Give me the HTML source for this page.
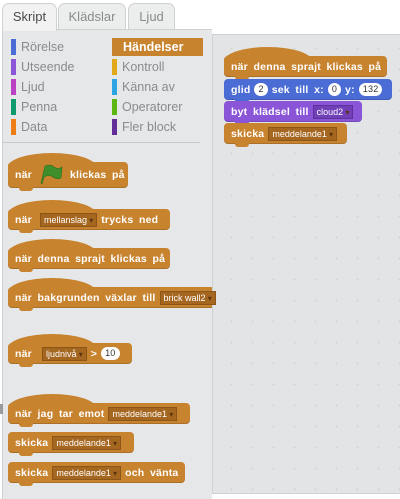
<!DOCTYPE html>
<html><head><meta charset="utf-8"><style>
*{margin:0;padding:0;box-sizing:border-box}
body{width:400px;height:490px;overflow:hidden;background:#fff;font-family:"Liberation Sans",Arial,sans-serif;position:relative}
.tab{position:absolute;top:3px;height:27px;border:1px solid #cfd1d2;border-bottom:none;border-radius:7px 7px 0 0;background:#eceded;color:#8a8b8c;font-size:13px;text-align:center;line-height:25px}
.tab.act{background:#f2f2f2;color:#4a4a4a;height:28px;z-index:2}
#pal{position:absolute;left:2px;top:29px;width:210px;height:470px;background:#e6e7e8;border-left:1px solid #cfd1d2;border-top:1px solid #cfd1d2}
#sep{position:absolute;left:2px;top:142px;width:198px;height:1px;background:#c8c9ca}
.cat{position:absolute;font-size:12.5px;color:#8a8b8c;height:14px;line-height:14px;padding-left:10px}
.cat i{position:absolute;left:0;top:-1px;width:5px;height:16px}
#sc{position:absolute;left:212px;top:34px;width:200px;height:460px;background:#e3e4e5;border:1px solid #cfd1d2;
background-image:radial-gradient(circle,#d2d3d4 0.8px,transparent 1.2px);background-size:21px 21px;background-position:8px 3px}
.b{position:absolute;height:21px;border-radius:4px;color:#fff;font-weight:bold;font-size:10.5px;letter-spacing:0.2px;display:flex;align-items:center;padding-left:7px;white-space:nowrap;word-spacing:2.5px;box-shadow:inset 0 -1px 0 rgba(0,0,0,.15)}
.b::after{content:"";position:absolute;left:11px;bottom:-3px;width:14px;height:4px;background:inherit;border-radius:0 0 3px 3px}
.o{background:#c8832f}.bl{background:#4a6cd4}.pu{background:#8a55d7}
.h::before{content:"";position:absolute;left:0;top:-9px;width:88px;height:14px;background:inherit;border-radius:50% 50% 0 0/100% 100% 0 0}
.b>*{position:relative;z-index:2}
.d{background:#a5661f;border:1px solid #8d5619;font-weight:normal;font-size:9px;letter-spacing:0;padding:0 3px;margin:0 4px;height:14px;line-height:13px;word-spacing:0}
.d::after{content:" ▾";font-size:8px;color:#5a3510}
.pd{background:#7140b8;border-color:#5e349c}
.n{background:#fff;color:#333;border-radius:8px;font-size:9px;padding:0 4px;height:13px;line-height:13px;margin:0 4px;font-weight:normal}
</style></head><body>
<div class="tab act" style="left:2px;width:55px">Skript</div>
<div class="tab" style="left:58px;width:68px">Klädslar</div>
<div class="tab" style="left:128px;width:47px">Ljud</div>
<div id="pal"></div>
<div id="sep"></div>
<div class="cat" style="left:11px;top:40px"><i style="background:#4a6cd4"></i>Rörelse</div>
<div class="cat" style="left:11px;top:60px"><i style="background:#8a55d7"></i>Utseende</div>
<div class="cat" style="left:11px;top:80px"><i style="background:#bb42c3"></i>Ljud</div>
<div class="cat" style="left:11px;top:100px"><i style="background:#0e9a6c"></i>Penna</div>
<div class="cat" style="left:11px;top:120px"><i style="background:#ee7d16"></i>Data</div>
<div style="position:absolute;left:112px;top:38px;width:91px;height:18px;background:#c8832f;color:#fff;font-weight:bold;font-size:12.5px;line-height:18px;padding-left:11px">Händelser</div>
<div class="cat" style="left:112px;top:60px"><i style="background:#e1a91a"></i>Kontroll</div>
<div class="cat" style="left:112px;top:80px"><i style="background:#2ca5e2"></i>Känna av</div>
<div class="cat" style="left:112px;top:100px"><i style="background:#5cb712"></i>Operatorer</div>
<div class="cat" style="left:112px;top:120px"><i style="background:#632d99"></i>Fler block</div>

<div class="b o h" style="left:8px;top:162px;width:120px;height:26px"><span>när</span>
<svg width="24" height="24" viewBox="0 0 24 22" style="margin:0 6px 0 8px"><path d="M5 2 Q11 0 14 3 Q18 6 22 3 L21 14 Q17 16 13 13 Q9 10 4 13 L2 20 L1 19 Z" fill="#3e8e2c" stroke="#2d6e1e" stroke-width=".6"/></svg><span>klickas på</span></div>
<div class="b o h" style="left:8px;top:209px;width:162px"><span>när</span><span class="d" style="margin-left:8px">mellanslag</span><span>trycks ned</span></div>
<div class="b o h" style="left:8px;top:248px;width:162px"><span>när denna sprajt klickas på</span></div>
<div class="b o h" style="left:8px;top:287px;width:210px"><span>när bakgrunden växlar till</span><span class="d" style="margin-right:0">brick wall2</span></div>
<div class="b o h" style="left:8px;top:343px;width:124px"><span>när</span><span class="d" style="margin-left:10px">ljudnivå</span><span>&gt;</span><span class="n">10</span></div>
<div class="b o h" style="left:8px;top:403px;width:182px"><span>när jag tar emot</span><span class="d">meddelande1</span></div>
<div class="b o" style="left:8px;top:432px;width:126px"><span>skicka</span><span class="d">meddelande1</span></div>
<div class="b o" style="left:8px;top:462px;width:177px"><span>skicka</span><span class="d">meddelande1</span><span>och vänta</span></div>
<div style="position:absolute;left:0;top:404px;width:3px;height:10px;background:#9a9b9c"></div>

<div id="sc"></div>
<div class="b o h" style="left:224px;top:56px;width:163px"><span>när denna sprajt klickas på</span></div>
<div class="b bl" style="left:224px;top:79px;width:168px;z-index:3"><span>glid</span><span class="n">2</span><span>sek till x:</span><span class="n">0</span><span>y:</span><span class="n">132</span></div>
<div class="b pu" style="left:224px;top:101px;width:138px;z-index:4"><span>byt klädsel till</span><span class="d pd">cloud2</span></div>
<div class="b o" style="left:224px;top:123px;width:123px;z-index:5"><span>skicka</span><span class="d">meddelande1</span></div>
</body></html>
